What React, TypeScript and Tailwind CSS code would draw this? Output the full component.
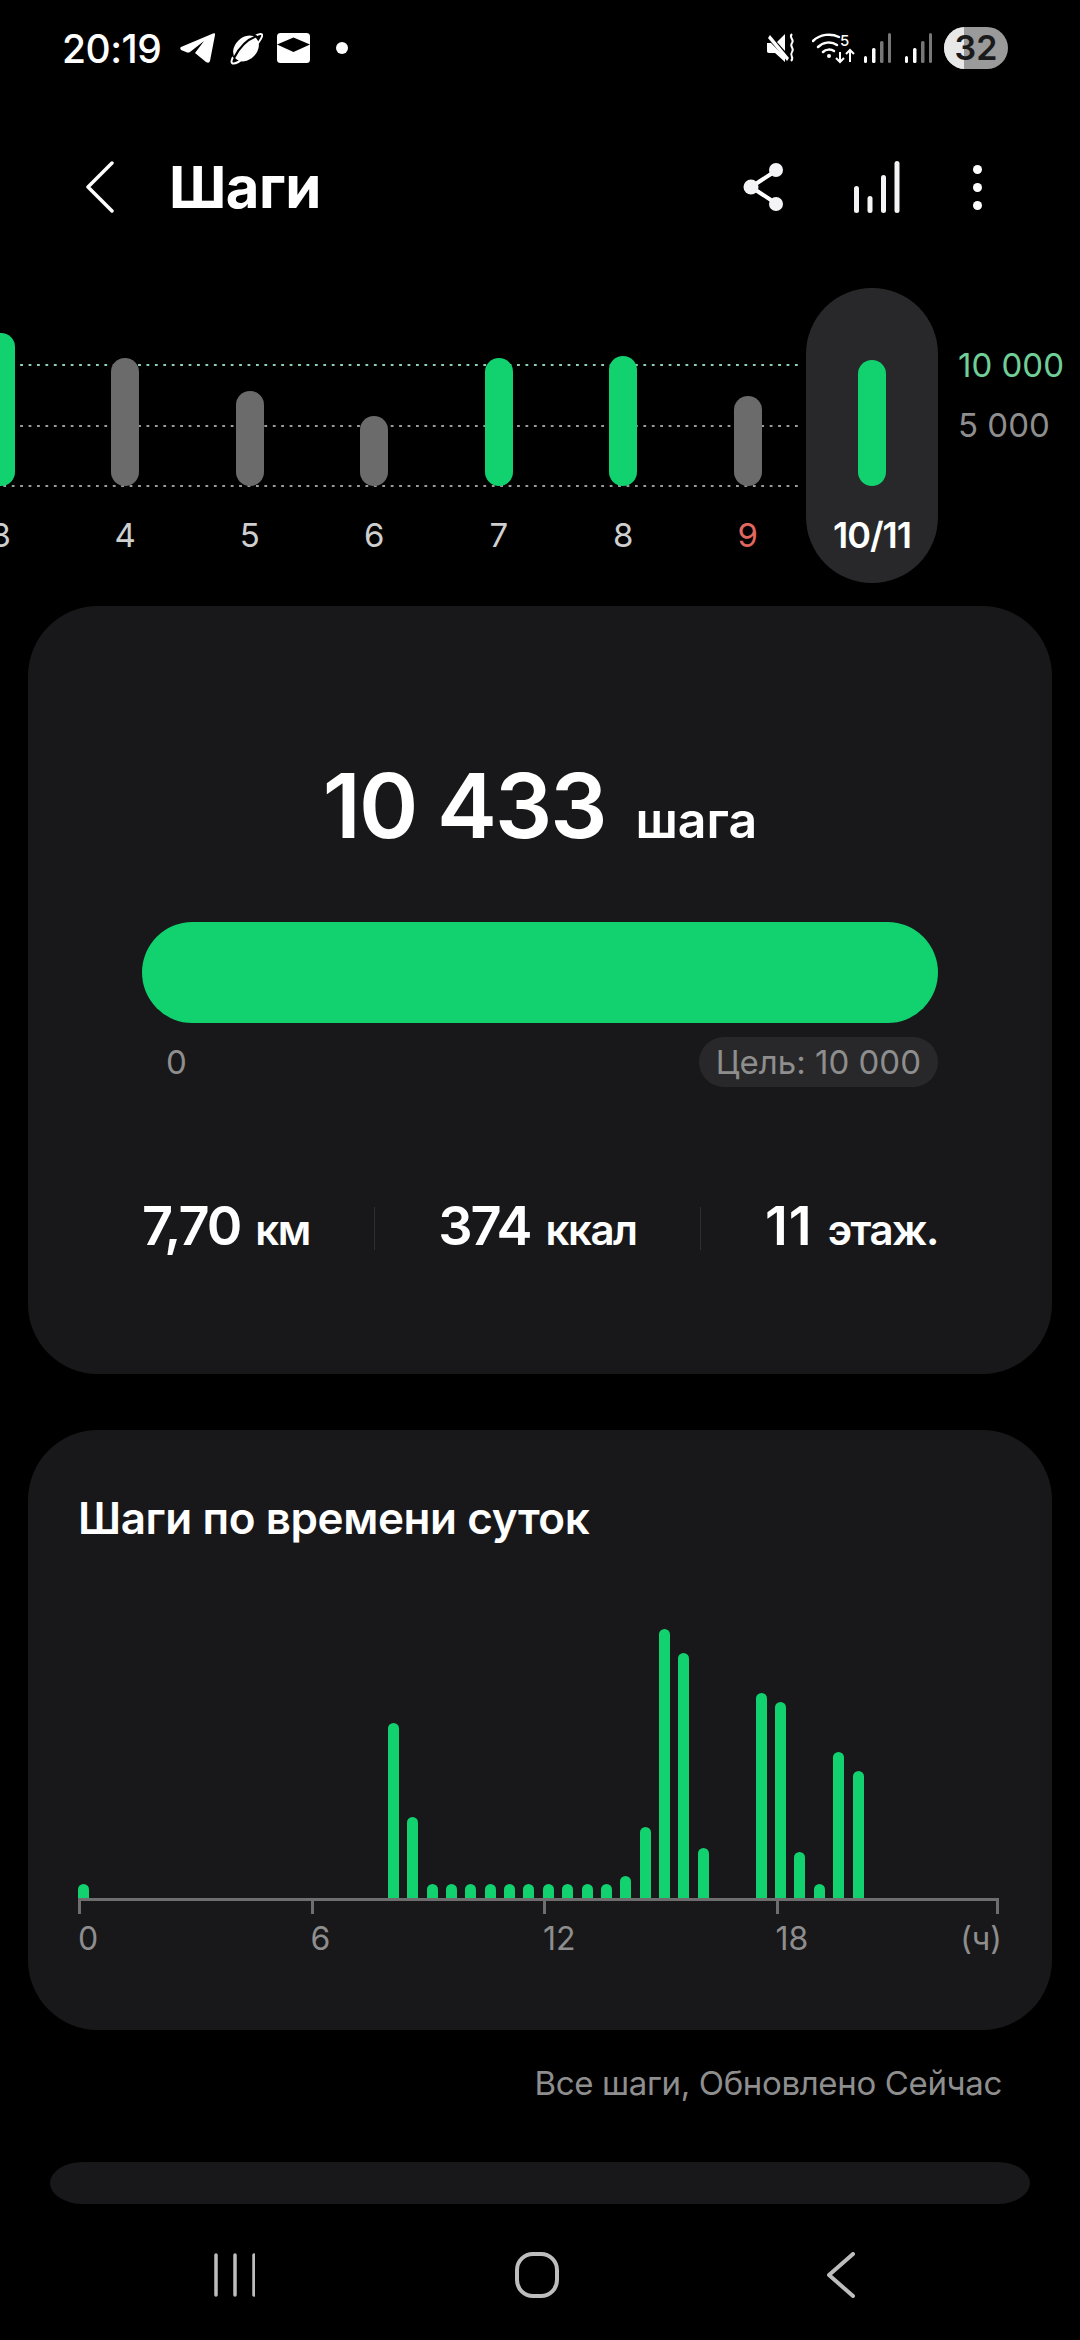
const font = { fontFamily: 'Inter, "Noto Sans", sans-serif' };

const weekBars = [
  { day: '3', height: 153, green: true },
  { day: '4', height: 128, green: false },
  { day: '5', height: 95, green: false },
  { day: '6', height: 70, green: false },
  { day: '7', height: 128, green: true },
  { day: '8', height: 130, green: true },
  { day: '9', height: 90, green: false, red: true },
];

// half-hour step counts, index 0 is midnight
const hourly = [
  14, 0, 0, 0, 0, 0, 0, 0, 0, 0, 0, 0, 0, 0, 0, 0, 175, 81, 14, 14, 14, 14, 14, 14, 14, 14, 14, 14, 22, 71, 269, 245,
  50, 0, 0, 205, 196, 46, 14, 146, 127,
];

function StatusIcons() {
  return (
    <div className="flex items-center">
      <svg width="36" height="33" viewBox="0 0 36 33" className="ml-[19px]">
        <path d="M1 15 33 1.500Q35.500.5 35 3L30 29Q29 32 26 30L15 21 24 9 10 20Q8 21 6 20L1 18Q-.5 16 1 15Z" fill="#fff" />
      </svg>
      <svg width="33" height="33" viewBox="0 0 33 33" className="ml-[14px]">
        <ellipse cx="16" cy="16.500" rx="11" ry="14.500" transform="rotate(45 16 16.500)" fill="#fff" />
        <path d="M26 3.500c3-1.500 5-2 6-1 1.500 2-5 11-13 19S4 33 2 31c-1-1-.5-3 1-6" fill="none" stroke="#fff" strokeWidth="2" />
        <path d="M27 4C18 7 10 14 4 26" fill="none" stroke="#000" strokeWidth="2.200" />
      </svg>
      <svg width="33" height="30" viewBox="0 0 33 30" className="ml-[14px]">
        <rect x="0" y="0" width="33" height="30" rx="3.500" fill="#fff" />
        <path d="M0 11.500 16.500 4.500 33 11.500 16.500 19Z" fill="#000" />
      </svg>
      <div className="ml-[26px] w-3 h-3 rounded-full bg-white" />
    </div>
  );
}

function RightStatus() {
  return (
    <div className="flex items-center">
      <svg width="30" height="30" viewBox="0 0 30 30">
        <path d="M0 10h4L18 24v5L8 20H2c-1.500 0-2-1-2-2Z" fill="#fff" />
        <path d="M3 2 22 25l-2 3L1 5Z" fill="#fff" />
        <path d="M10 9 18 1v17Z" fill="#fff" />
        <path d="M25 1c-4 4 3 5 0 9s3 5 0 9 3 5-1 9" fill="none" stroke="#fff" strokeWidth="2" />
      </svg>
      <svg width="44" height="32" viewBox="0 0 44 32" className="ml-[15px]">
        <path d="M1 9C8 2 19 1 27 5" fill="none" stroke="#fff" strokeWidth="2.500" strokeLinecap="round" />
        <path d="M6 15c5-5 13-6 19-2" fill="none" stroke="#fff" strokeWidth="2.500" strokeLinecap="round" />
        <path d="M11 20c3-3 8-3 11-1" fill="none" stroke="#fff" strokeWidth="2.500" strokeLinecap="round" />
        <circle cx="17" cy="24" r="2" fill="#fff" />
        <path d="M28 20v10m-4-4 4 4 4-4M38 30V18m-4 4 4-4 4 4" fill="none" stroke="#fff" strokeWidth="2" />
        <text x="28" y="14" fill="#fff" fontSize="15" fontWeight="500" style={font}>5</text>
      </svg>
      {[0, 1].map((i) => (
        <svg key={i} width="27" height="30" viewBox="0 0 27 30" className={i === 0 ? 'ml-[8px]' : 'ml-[14px]'}>
          <rect x="0" y="23" width="3" height="7" rx="1.500" fill="#fff" />
          <rect x="8" y="15" width="3.500" height="15" rx="1.500" fill="#fff" />
          <rect x="16" y="8" width="3.500" height="22" rx="1.500" fill="#777" />
          <rect x="24" y="0" width="3" height="30" rx="1.500" fill="#777" />
        </svg>
      ))}
      <div className="ml-[12px] w-16 h-[42px] rounded-full bg-[#9a9a9a] overflow-hidden relative flex items-center justify-center">
        <div className="absolute left-0 top-0 bottom-0 w-5 bg-[#e8e8e8]" />
        <span className="relative text-[34px] font-semibold text-[#1a1a1a] leading-none">32</span>
      </div>
    </div>
  );
}

function WeekChart() {
  return (
    <div className="relative h-[295px] mt-[55px] overflow-hidden">
      {/* goal guides */}
      <div className="absolute left-0 w-[803px] top-[75px] h-[4px] bg-[radial-gradient(circle,#8fd0b4_1.200px,transparent_1.500px)] bg-[length:8.430px_4px] bg-[position:0.500px_0]" />
      <div className="absolute left-0 w-[803px] top-[136px] h-[4px] bg-[radial-gradient(circle,#9a9a9a_1.200px,transparent_1.500px)] bg-[length:8.430px_4px] bg-[position:0.500px_0]" />
      <div className="absolute left-0 w-[803px] top-[196px] h-[4px] bg-[radial-gradient(circle,#9a9a9a_1.200px,transparent_1.500px)] bg-[length:8.430px_4px] bg-[position:0.500px_0]" />

      <div className="relative flex -ml-[61.500px]">
        {weekBars.map((b) => (
          <div key={b.day} className="w-[124.500px] shrink-0 flex flex-col items-center">
            <div className="h-[198px] flex items-end">
              <div
                className={`w-[28px] rounded-full ${b.green ? 'bg-[#12d26f]' : 'bg-[#6b6b6b]'}`}
                style={{ height: b.height }}
              />
            </div>
            <span className={`mt-[29px] text-[33px] leading-[40px] ${b.red ? 'text-[#e2675f]' : 'text-[#cfcfcf]'}`}>
              {b.day}
            </span>
          </div>
        ))}
        {/* selected day */}
        <div className="w-[132px] shrink-0 h-[295px] -ml-[4px] rounded-full bg-[#28282a] flex flex-col items-center">
          <div className="h-[198px] flex items-end">
            <div className="w-[28px] h-[126px] rounded-full bg-[#12d26f]" />
          </div>
          <span className="mt-[29px] text-[36px] leading-[40px] font-semibold text-white tracking-[-1px]">10/11</span>
        </div>
        <div className="ml-[20px] pt-[57px] flex flex-col">
          <span className="text-[33px] leading-[40px] text-[#6fcf97] whitespace-nowrap">10 000</span>
          <span className="mt-[20px] text-[33px] leading-[40px] text-[#8e8e8e] whitespace-nowrap">5 000</span>
        </div>
      </div>
    </div>
  );
}

function Stat({ value, unit, loose }: { value: string; unit: string; loose?: boolean }) {
  return (
    <div className="flex items-baseline gap-[15px] whitespace-nowrap">
      <span className={`text-[54px] leading-[60px] font-semibold text-white ${loose ? 'tracking-[1px]' : 'tracking-[-2px]'}`}>
        {value}
      </span>
      <span className="text-[42px] leading-[60px] font-semibold text-white tracking-[-1.500px]">{unit}</span>
    </div>
  );
}

function Divider() {
  return <div className="w-px h-[43px] bg-[#303032]" />;
}

function SummaryCard() {
  return (
    <div className="mx-[28px] mt-[23px] h-[768px] rounded-[70px] bg-[#18181a] px-[114px] flex flex-col">
      <div className="mt-[150px] flex justify-center items-baseline gap-[30px]">
        <span className="text-[90px] leading-[100px] font-semibold text-white tracking-[-2px]">10 433</span>
        <span className="text-[50px] leading-[100px] font-semibold text-white">шага</span>
      </div>
      <div className="mt-[52px] h-[101px] rounded-full bg-[#12d26f]" />
      <div className="mt-[14px] flex items-center justify-between">
        <span className="ml-[24px] text-[33px] leading-[50px] text-[#8e8e8e]">0</span>
        <span className="h-[50px] px-[17px] rounded-full bg-[#28282a] text-[33px] leading-[50px] text-[#8e8e8e] whitespace-nowrap">
          Цель: 10 000
        </span>
      </div>
      <div className="mt-[109px] flex items-center justify-between">
        <Stat value="7,70" unit="км" />
        <Divider />
        <Stat value="374" unit="ккал" />
        <Divider />
        <Stat value="11" unit="этаж." loose />
      </div>
    </div>
  );
}

function HourlyCard() {
  return (
    <div className="mx-[28px] mt-[56px] h-[600px] rounded-[70px] bg-[#18181a] pl-[50px] flex flex-col">
      <h2 className="mt-[60px] text-[44px] leading-[56px] font-semibold text-white tracking-[-0.400px]">
        Шаги по времени суток
      </h2>
      <div className="mt-[22px] h-[330px] flex items-end gap-[8.360px] pl-[0.200px]">
        {hourly.map((h, i) => (
          <div key={i} className="w-[11px] rounded-t-full bg-[#12d26f]" style={{ height: h }} />
        ))}
      </div>
      <div className="flex w-[921px] border-t-[3px] border-[#6e6e6e]">
        {['0', '6', '12'].map((t) => (
          <div key={t} className="w-[232.500px] shrink-0">
            <div className="w-[3px] h-[13px] bg-[#6e6e6e]" />
            <span className="block mt-[5px] text-[32px] leading-[40px] text-[#8e8e8e]">{t}</span>
          </div>
        ))}
        <div className="flex-1 flex justify-between">
          <div>
            <div className="w-[3px] h-[13px] bg-[#6e6e6e]" />
            <span className="block mt-[5px] text-[32px] leading-[40px] text-[#8e8e8e]">18</span>
          </div>
          <div className="flex flex-col items-end">
            <div className="w-[3px] h-[13px] bg-[#6e6e6e]" />
            <span className="block mt-[5px] -mr-[3px] text-[32px] leading-[40px] text-[#8e8e8e]">(ч)</span>
          </div>
        </div>
      </div>
    </div>
  );
}

export default function App() {
  return (
    <div className="w-[1080px] h-[2340px] bg-black overflow-hidden flex flex-col" style={font}>
      {/* status bar */}
      <div className="h-[96px] pl-[62px] pr-[72px] flex items-center justify-between">
        <div className="flex items-center">
          <span className="text-[39px] leading-none font-medium text-white tracking-[-0.500px]">20:19</span>
          <StatusIcons />
        </div>
        <RightStatus />
      </div>

      {/* title row */}
      <div className="h-[92px] mt-[45px] pl-[86px] pr-[98px] flex items-center">
        <svg width="28" height="52" viewBox="0 0 28 52" fill="none">
          <path d="M26 2 2 26l24 24" stroke="#fff" strokeWidth="3.500" strokeLinecap="round" strokeLinejoin="round" />
        </svg>
        <h1 className="ml-[55px] text-[58px] leading-none font-bold text-white tracking-[-0.500px]">Шаги</h1>
        <div className="ml-auto flex items-center">
          <svg width="42" height="48" viewBox="0 0 42 48" fill="none">
            <path d="M34 7 8 24l26 17" stroke="#fff" strokeWidth="4" />
            <circle cx="33" cy="7" r="7" fill="#f4f4f6" />
            <circle cx="8" cy="24" r="7.500" fill="#f4f4f6" />
            <circle cx="33" cy="41" r="7" fill="#f4f4f6" />
          </svg>
          <svg width="46" height="52" viewBox="0 0 46 52" className="ml-[69px]" fill="#f4f4f6">
            <rect x="0" y="25" width="5" height="27" rx="2.500" />
            <rect x="13.500" y="35" width="5" height="17" rx="2.500" />
            <rect x="27" y="14" width="5" height="38" rx="2.500" />
            <rect x="40.500" y="0" width="5" height="52" rx="2.500" />
          </svg>
          <div className="ml-[73px] flex flex-col gap-[9px]">
            <div className="w-[9px] h-[9px] rounded-full bg-white" />
            <div className="w-[9px] h-[9px] rounded-full bg-white" />
            <div className="w-[9px] h-[9px] rounded-full bg-white" />
          </div>
        </div>
      </div>

      <WeekChart />
      <SummaryCard />
      <HourlyCard />

      <p className="mt-[33px] pr-[78px] text-right text-[33px] leading-[40px] text-[#8e8e8e] tracking-[-0.350px]">
        Все шаги, Обновлено Сейчас
      </p>

      {/* next card, cut off by the navigation bar */}
      <div className="mx-[50px] mt-[59px] h-[42px] rounded-[33px/21px] bg-[#18181a]" />

      {/* navigation bar */}
      <div className="mt-[48px] flex items-center">
        <svg width="42" height="44" viewBox="0 0 42 44" className="ml-[213px]" fill="none" stroke="#bdbdbd" strokeWidth="3.500" strokeLinecap="round">
          <path d="M3 2v40M22 2v40M41 2v40" />
        </svg>
        <div className="ml-[260px] w-[44px] h-[46px] rounded-[18px] border-[4px] border-[#bdbdbd]" />
        <svg width="30" height="46" viewBox="0 0 30 46" className="ml-[267px]" fill="none" stroke="#bdbdbd" strokeWidth="4" strokeLinecap="round" strokeLinejoin="round">
          <path d="M27 2 3 23l24 21" />
        </svg>
      </div>
    </div>
  );
}
